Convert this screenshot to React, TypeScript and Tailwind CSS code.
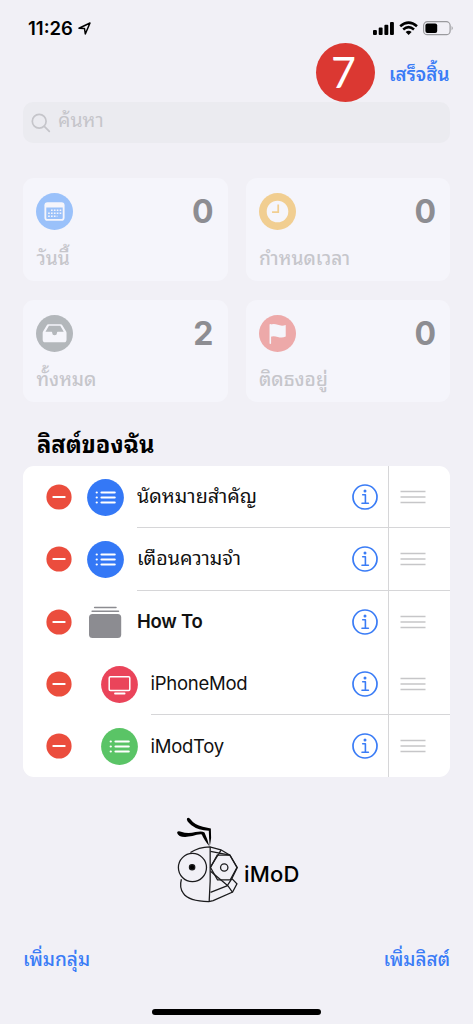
import type { ReactNode } from "react";

const CalendarIcon = () => (
    <svg viewBox="0 0 36 36" className="size-[37px]">
        <circle cx="18" cy="18" r="18" fill="#9ac1fa" />
        <rect x="8.2" y="9" width="19.6" height="18" rx="3" fill="#f5f5fb" />
        <path d="M10 14h16v10.4a1 1 0 0 1-1 1H11a1 1 0 0 1-1-1z" fill="#9ac1fa" />
        <path d="M14.6 16.7H25M11.8 19.7H25M11.8 22.7h9" stroke="#f5f5fb" strokeWidth="1.5" strokeDasharray="1.6 1.2" />
    </svg>
);

const ClockIcon = () => (
    <svg viewBox="0 0 36 36" className="size-[37px]">
        <circle cx="18" cy="18" r="18" fill="#f1ce91" />
        <circle cx="18" cy="18" r="10.5" fill="#f5f5fb" />
        <path d="M18.7 11.3v7.3h-6" stroke="#f1ce91" strokeWidth="1.7" fill="none" />
    </svg>
);

const TrayIcon = () => (
    <svg viewBox="0 0 36 36" className="size-[37px]">
        <circle cx="18" cy="18" r="18" fill="#b3b7bb" />
        <path d="M12 9h12q1 0 1.6.9l3.6 6q.5.8.5 1.7v6.4q0 2.5-2.5 2.5H9q-2.5 0-2.5-2.5v-6.4q0-.9.5-1.7l3.5-6Q11 9 12 9z" fill="#f5f5fb" />
        <path d="M12.6 10.5h11L27 16.4h-5.8q-.8 0-.8 1 0 2.4-2.3 2.4t-2.3-2.4q0-1-.8-1H9.2z" fill="#b3b7bb" />
    </svg>
);

const FlagIcon = () => (
    <svg viewBox="0 0 36 36" className="size-[37px]">
        <circle cx="18" cy="18" r="18" fill="#eda9a9" />
        <path d="M11 27.5V9.6" stroke="#f5f5fb" strokeWidth="1.5" strokeLinecap="round" />
        <path d="M10.7 9.6q3.6-1.5 7.5 0t7.8.2v11.2q-3.6 1.6-7.7.3t-7.6 0z" fill="#f5f5fb" />
    </svg>
);

const ListIcon = ({ color }: { color: string }) => (
    <svg viewBox="0 0 37 37" className="size-[37px]">
        <circle cx="18.5" cy="18.5" r="18.4" fill={color} />
        <path d="M14.5 13.5h13.2M14.5 18.5h13.2M14.5 23.5h13.2" stroke="#fff" strokeWidth="2.2" strokeLinecap="round" />
        <path d="M9.7 13.5h.1M9.7 18.5h.1M9.7 23.5h.1" stroke="#fff" strokeWidth="2.2" strokeLinecap="round" />
    </svg>
);

const ScreenIcon = () => (
    <svg viewBox="0 0 37 37" className="size-[37px]">
        <circle cx="18.5" cy="18.5" r="18.4" fill="#ea445a" />
        <rect x="8.2" y="10.7" width="20.6" height="13.8" rx="1.2" fill="none" stroke="#fff" strokeWidth="1.5" />
        <path d="M14 27.5h9.6" stroke="#fff" strokeWidth="1.8" strokeLinecap="round" />
    </svg>
);

const StackIcon = () => (
    <svg viewBox="0 0 37 37" className="size-[37px]">
        <path d="M7.6 4.500h21.400M5.100 8.200h26.400" stroke="#8c8c91" strokeWidth="1.5" strokeLinecap="round" />
        <rect x="2" y="11" width="32.2" height="24" rx="3.5" fill="#8c8c91" />
    </svg>
);

const RemoveIcon = () => (
    <svg viewBox="0 0 26 26" className="size-[26px]">
        <circle cx="13" cy="13" r="12.6" fill="#eb4d3d" />
        <path d="M7.3 13h11.4" stroke="#fff" strokeWidth="2" strokeLinecap="round" />
    </svg>
);

const InfoIcon = () => (
    <svg viewBox="0 0 26 26" className="size-[26px]" fill="none" stroke="#3a7cf6">
        <circle cx="13" cy="13" r="12" strokeWidth="1.7" />
        <path d="M10.7 10.8h2.7v8.3M10 19.2h6.4" strokeWidth="1.6" strokeLinecap="round" strokeLinejoin="round" />
        <circle cx="13" cy="6.9" r="1.5" fill="#3a7cf6" stroke="none" />
    </svg>
);

const GripIcon = () => (
    <svg viewBox="0 0 26 14" className="h-[14px] w-[26px]">
        <path d="M.5 1.5h25M.5 7h25M.5 12.5h25" stroke="#c6c6c8" strokeWidth="1.7" />
    </svg>
);

const StatusIcons = () => (
    <svg viewBox="0 0 82 16" className="h-4 w-[82px]">
        <rect x="1" y="10" width="3.9" height="5" rx="1" />
        <rect x="6.7" y="7.5" width="3.9" height="7.5" rx="1" />
        <rect x="12.4" y="4.8" width="3.9" height="10.2" rx="1" />
        <rect x="18" y="2" width="3.9" height="13" rx="1" />
        <g fill="none" stroke="#000" strokeWidth="2.5">
            <path d="M28.2 6.3q8.4-7.4 16.8 0" />
            <path d="M31.2 9.5q5.4-4.8 10.8 0" />
        </g>
        <path d="M33.6 11.9q3-2.2 6 0L36.6 15z" />
        <rect x="51.6" y="1.7" width="26.5" height="13" rx="3.8" fill="none" stroke="#9a9a9e" strokeWidth="1.2" />
        <rect x="53.4" y="3.4" width="11.8" height="9.6" rx="2" />
        <path d="M79.6 6q2.3 2.2 0 4.4z" fill="#9a9a9e" />
    </svg>
);

const RobotLogo = () => (
    <svg viewBox="45 50 200 260" className="h-[87px] w-[67px]" fill="none" stroke="#1b1b1d" strokeWidth="3.8">
        <path d="M81 57q5-5 10 3 12 17 37 22l24 5q3 27-3 54-3-25-3-47-31 0-52-16-17-14-13-21z" fill="#000" stroke="none" />
        <path d="M51 100q2-7 12-3 20 7 43 1 20-4 27 1 8 16 14 41-17-22-22-35-12-1-28 5-41 8-46-10z" fill="#000" stroke="none" />
        <path d="M91 159q24-16 58-17l33 9 27 16 22 37-16 33 15 16-13 24-58 26-13 3q-61-2-76-25-13-16-6-42" />
        <path d="M150 142v102l-3 62" />
        <circle cx="97" cy="204" r="42" />
        <circle cx="96" cy="203" r="8" fill="#000" />
        <path d="M151 204l20-37h38l21 37-20 37h-38z" />
        <circle cx="192" cy="204" r="11" />
        <path d="M151 156l58 11M183 151l-32 51M151 215l51 43M215 237l-13 20 15 21M151 278l51-20" />
    </svg>
);

const SummaryCard = ({ icon, count, label }: { icon: ReactNode; count: number; label: string }) => (
    <div className="flex h-[102.5px] flex-col justify-between rounded-[11px] bg-[#f5f5fb] pt-[15px] pr-[14px] pb-[9px] pl-[13px]">
        <div className="flex items-start justify-between">
            {icon}
            <span className="text-[32px] leading-[38px] font-bold text-[#8d8d92]">{count}</span>
        </div>
        <span className="pl-[0.5px] text-[19px] leading-[27px] font-medium whitespace-nowrap text-[#c6c6cb]">{label}</span>
    </div>
);

type RowProps = { icon: ReactNode; title: string; nested?: boolean; bold?: boolean; divider?: boolean; thai?: boolean };

const ListRow = ({ icon, title, nested, bold, divider, thai }: RowProps) => (
    <div className="flex h-[62.3px] items-center pl-[23px]">
        <RemoveIcon />
        <div className={nested ? "ml-[28.5px]" : "ml-[15px]"}>{icon}</div>
        <div className={`ml-[13px] flex flex-1 items-center self-stretch ${divider ? "border-b border-[#d6d6d8]" : ""}`}>
            <span
                className={`flex-1 whitespace-nowrap text-[#111] ${thai ? "text-[19.7px]" : "pt-px text-[18.5px] tracking-[-0.25px]"} ${bold ? "font-semibold" : ""}`}
            >
                {title}
            </span>
            <InfoIcon />
            <div className="ml-[10px] flex w-[62px] items-center self-stretch border-l border-[#d6d6d8] pl-[11px]">
                <GripIcon />
            </div>
        </div>
    </div>
);

export default function App() {
    return (
        <main className="flex h-[1024px] w-[473px] flex-col overflow-hidden bg-[#f1f0f6] px-[23px] font-['Inter','Noto_Sans_Thai_Looped','Loma','Garuda','Waree',sans-serif]">
            <header className="flex h-[43px] items-start justify-between pt-[18px] pl-[5px]">
                <div className="flex items-center gap-[5px] text-[18.5px] leading-[20px] font-semibold">
                    11:26
                    <svg viewBox="0 0 13 13" className="size-[13px]" fill="none" stroke="#000" strokeWidth="1.5" strokeLinejoin="round">
                        <path d="M1 6.3 12 1 7.3 12 6.5 6.5z" />
                    </svg>
                </div>
                <div className="-mr-[4px] pt-[2px]">
                    <StatusIcons />
                </div>
            </header>

            <nav className="flex h-[59px] items-center justify-end gap-[14px]">
                <span className="flex size-[59px] items-center justify-center rounded-full bg-[#db3832] pr-[4px] pb-[3px] font-['Lato'] text-[43px] leading-none text-white">
                    7
                </span>
                <button className="w-[61px] pt-[6px] text-left text-[18.7px] font-semibold whitespace-nowrap text-[#3a7cf6]">เสร็จสิ้น</button>
            </nav>

            <div className="flex h-[41px] items-center gap-[7px] rounded-[10px] bg-[#ebebf0] pl-[8px] text-[#c5c5ca]">
                <svg viewBox="0 0 20 20" className="size-[20px]" fill="none" stroke="currentColor" strokeWidth="1.7" strokeLinecap="round">
                    <circle cx="8.2" cy="8.2" r="6.9" />
                    <path d="m13.3 13.3 5 5" />
                </svg>
                <span className="pb-[3px] text-[19.5px]">ค้นหา</span>
            </div>

            <section className="mt-[35px] grid grid-cols-2 gap-x-[18px] gap-y-[19px]">
                <SummaryCard icon={<CalendarIcon />} count={0} label="วันนี้" />
                <SummaryCard icon={<ClockIcon />} count={0} label="กำหนดเวลา" />
                <SummaryCard icon={<TrayIcon />} count={2} label="ทั้งหมด" />
                <SummaryCard icon={<FlagIcon />} count={0} label="ติดธงอยู่" />
            </section>

            <h2 className="mt-[25px] h-[39px] pl-[14px] text-[23.7px] leading-[36px] font-bold whitespace-nowrap">ลิสต์ของฉัน</h2>

            <section className="overflow-hidden rounded-[11px] bg-white">
                <ListRow icon={<ListIcon color="#3478f6" />} title="นัดหมายสำคัญ" thai divider />
                <ListRow icon={<ListIcon color="#3478f6" />} title="เตือนความจำ" thai divider />
                <ListRow icon={<StackIcon />} title="How To" bold />
                <ListRow icon={<ScreenIcon />} title="iPhoneMod" nested divider />
                <ListRow icon={<ListIcon color="#5ac466" />} title="iModToy" nested />
            </section>

            <div className="mt-[39px] flex h-[87px] pl-[152px]">
                <RobotLogo />
                <span className="mt-[43px] ml-[2px] text-[22px] leading-[30px] font-medium tracking-[0.2px]">iMoD</span>
            </div>

            <footer className="mt-[41px] flex h-[32px] items-center justify-between text-[19px] font-medium text-[#3a7cf6]">
                <button>เพิ่มกลุ่ม</button>
                <button>เพิ่มลิสต์</button>
            </footer>

            <div className="mt-auto mb-[9px] h-[6px] w-[169px] self-center rounded-full bg-black" />
        </main>
    );
}
